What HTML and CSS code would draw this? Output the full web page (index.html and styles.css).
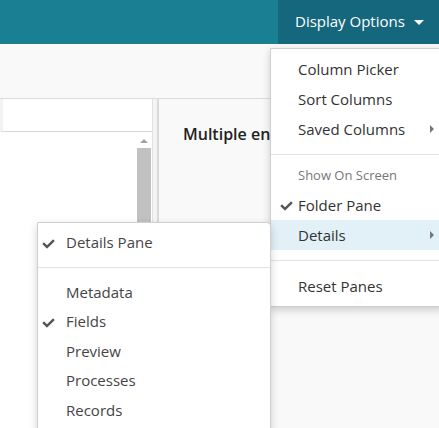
FILE: index.html
```html
<!DOCTYPE html>
<html>
<head>
<meta charset="utf-8">
<link rel="stylesheet" href="styles.css">
</head>
<body>
<div class="page">
  <header class="topbar">
    <div class="display-btn">Display Options <span class="caret-down"></span></div>
  </header>
  <div class="toolbar"></div>
  <div class="panes">
    <div class="left-pane">
      <div class="left-head"></div>
      <div class="left-body">
        <div class="list"></div>
        <div class="scrollbar">
          <div class="arrow-up"></div>
          <div class="thumb"></div>
        </div>
      </div>
    </div>
    <div class="splitter"></div>
    <div class="right-pane">
      <div class="right-title">Multiple entries selected</div>
    </div>
  </div>

  <div class="menu main-menu">
    <div class="item">Column Picker</div>
    <div class="item">Sort Columns</div>
    <div class="item has-sub">Saved Columns <span class="caret-right"></span></div>
    <div class="sep sep-a"></div>
    <div class="header">Show On Screen</div>
    <div class="item"><svg class="check" viewBox="0 0 512 512"><path d="M173.898 439.404l-166.4-166.4c-9.997-9.997-9.997-26.206 0-36.204l36.203-36.204c9.997-9.998 26.207-9.998 36.204 0L192 312.69 432.095 72.596c9.997-9.997 26.207-9.997 36.204 0l36.203 36.204c9.997 9.997 9.997 26.206 0 36.204l-294.4 294.401c-9.998 9.997-26.207 9.997-36.204-.001z"/></svg>Folder Pane</div>
    <div class="item active has-sub">Details <span class="caret-right"></span></div>
    <div class="sep sep-b"></div>
    <div class="item">Reset Panes</div>
  </div>

  <div class="menu sub-menu">
    <div class="item"><svg class="check" viewBox="0 0 512 512"><path d="M173.898 439.404l-166.4-166.4c-9.997-9.997-9.997-26.206 0-36.204l36.203-36.204c9.997-9.998 26.207-9.998 36.204 0L192 312.69 432.095 72.596c9.997-9.997 26.207-9.997 36.204 0l36.203 36.204c9.997 9.997 9.997 26.206 0 36.204l-294.4 294.401c-9.998 9.997-26.207 9.997-36.204-.001z"/></svg>Details Pane</div>
    <div class="sep sep-c"></div>
    <div class="item">Metadata</div>
    <div class="item"><svg class="check" viewBox="0 0 512 512"><path d="M173.898 439.404l-166.4-166.4c-9.997-9.997-9.997-26.206 0-36.204l36.203-36.204c9.997-9.998 26.207-9.998 36.204 0L192 312.69 432.095 72.596c9.997-9.997 26.207-9.997 36.204 0l36.203 36.204c9.997 9.997 9.997 26.206 0 36.204l-294.4 294.401c-9.998 9.997-26.207 9.997-36.204-.001z"/></svg>Fields</div>
    <div class="item">Preview</div>
    <div class="item">Processes</div>
    <div class="item">Records</div>
  </div>
</div>
</body>
</html>
```
FILE: styles.css
```css
html, body {
  margin: 0;
  padding: 0;
}
body {
  font-family: "Open Sans", "Liberation Sans", sans-serif;
  width: 439px;
  height: 428px;
  overflow: hidden;
  background: #f9f9f9;
}
.page {
  position: relative;
  width: 439px;
  height: 428px;
  overflow: hidden;
}
.topbar {
  height: 44px;
  background: #1a7f93;
  display: flex;
  justify-content: flex-end;
}
.display-btn {
  width: 161px;
  box-sizing: border-box;
  background: #15677d;
  color: #fff;
  font-size: 15px;
  padding-left: 17px;
  display: flex;
  align-items: center;
  height: 44px;
  padding-bottom: 2px;
}
.caret-down {
  display: inline-block;
  width: 0;
  height: 0;
  border-left: 5px solid transparent;
  border-right: 5px solid transparent;
  border-top: 5px solid #fff;
  margin-left: 9px;
  margin-top: 3px;
}
.toolbar {
  height: 54px;
  background: #f9f9f9;
  border-bottom: 1px solid #dcdcdc;
}
.panes {
  display: flex;
  height: 329px;
}
.left-pane {
  width: 152px;
  background: #fff;
  display: flex;
  flex-direction: column;
}
.left-head {
  height: 32px;
  border-bottom: 1px solid #d8d8d8;
  border-left: 3px solid #f3f3f3;
}
.left-body {
  flex: 1;
  display: flex;
}
.list {
  flex: 1;
}
.scrollbar {
  width: 14px;
  margin-right: 1px;
  background: #fff;
  display: flex;
  flex-direction: column;
  align-items: center;
}
.arrow-up {
  width: 0;
  height: 0;
  border-left: 4px solid transparent;
  border-right: 4px solid transparent;
  border-bottom: 4px solid #a3a3a3;
  margin-top: 7px;
  margin-bottom: 5px;
}
.thumb {
  width: 14px;
  flex: 1;
  background: #c1c1c1;
}
.splitter {
  width: 4px;
  border-left: 1px solid #e2e2e2;
  border-right: 2px solid #dadada;
  background: #f4f4f4;
}
.right-pane {
  flex: 1;
  background: #f9f9f9;
}
.right-title {
  font-size: 16px;
  font-weight: 600;
  color: #222;
  margin: 24px 0 0 24px;
  width: 87px;
  overflow: hidden;
  white-space: nowrap;
}
.menu {
  position: absolute;
  background: #fff;
  border: 1px solid #cfcfcf;
  box-shadow: 0 3px 8px rgba(0, 0, 0, 0.18);
  box-sizing: border-box;
}
.main-menu {
  left: 270px;
  top: 48px;
  width: 175px;
  padding: 5px 0 5px;
}
.sub-menu {
  left: 37px;
  top: 222px;
  width: 234px;
  height: 220px;
  padding: 5px 0 0;
  border-top-right-radius: 4px;
  z-index: 2;
}
.item {
  position: relative;
  height: 30px;
  line-height: 30px;
  font-size: 15px;
  color: #333;
  padding-left: 27px;
  white-space: nowrap;
}
.sub-menu .item {
  height: 29.6px;
  line-height: 29.6px;
  color: #454545;
  padding-left: 28px;
}
.item.active {
  background: #e2f1f7;
}
.header {
  height: 30px;
  line-height: 31px;
  font-size: 13px;
  color: #777;
  padding-left: 27px;
}
.sep {
  height: 1px;
  background: #e3e3e3;
}
.sep-a {
  margin: 10px 0 5px;
}
.sep-b {
  margin: 10px 0 10px;
}
.sep-c {
  margin: 9px 0 10px;
}
.check {
  position: absolute;
  left: 9px;
  top: 10px;
  width: 13px;
  height: 12px;
  fill: #555;
}
.sub-menu .check {
  left: 4px;
}
.caret-right {
  position: absolute;
  right: 10px;
  top: 11px;
  width: 0;
  height: 0;
  border-top: 4px solid transparent;
  border-bottom: 4px solid transparent;
  border-left: 4px solid #777;
}
```
